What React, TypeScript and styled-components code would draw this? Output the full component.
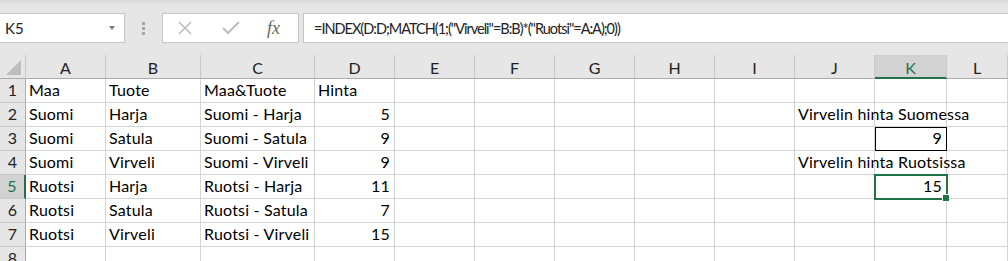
import React from "react";
import styled, { createGlobalStyle } from "styled-components";

const GlobalStyle = createGlobalStyle`
  html, body {
    margin: 0;
    padding: 0;
    background: #ffffff;
    overflow: hidden;
  }
  body {
    font-family: Lato, "Liberation Sans", sans-serif;
    color: #000;
  }
`;

const Sheet = styled.div`
  width: 1008px;
  height: 261px;
  overflow: hidden;
  background: #e6e6e6;
`;

const FormulaBar = styled.div`
  height: 55px;
  display: flex;
  align-items: flex-start;
  padding-top: 13px;
  box-sizing: border-box;
  background: linear-gradient(#d9d9d9 0px, #e6e6e6 5px);
`;

const NameBox = styled.div`
  width: 125px;
  height: 30px;
  box-sizing: border-box;
  background: #fff;
  border: 1px solid #c6c6c6;
  border-left: none;
  display: flex;
  align-items: center;
  justify-content: space-between;
  padding: 0 9px 0 5px;
  font-size: 15px;
  color: #222;
`;

const DropArrow = styled.span`
  width: 0;
  height: 0;
  border-left: 3px solid transparent;
  border-right: 3px solid transparent;
  border-top: 4px solid #7a7a7a;
`;

const Grip = styled.div`
  width: 37px;
  height: 30px;
  display: flex;
  flex-direction: column;
  align-items: center;
  justify-content: center;
  gap: 2px;
`;

const GripDot = styled.span`
  width: 3px;
  height: 3px;
  background: #a6a6a6;
`;

const FxBox = styled.div`
  width: 137px;
  height: 30px;
  box-sizing: border-box;
  background: #fff;
  border: 1px solid #c6c6c6;
  display: flex;
  align-items: center;
  padding-left: 14px;
  gap: 29px;
`;

const Fx = styled.span`
  font-family: "Liberation Serif", serif;
  font-style: italic;
  font-size: 18px;
  color: #666;
  margin-left: -2px;
`;

const FormulaInput = styled.div`
  flex: 1;
  margin-left: 4px;
  height: 30px;
  box-sizing: border-box;
  background: #fff;
  border: 1px solid #c6c6c6;
  border-right: none;
  display: flex;
  align-items: center;
  padding-left: 10px;
  font-size: 14.5px;
  letter-spacing: -1px;
  color: #222;
  white-space: nowrap;
`;

const Grid = styled.div`
  display: grid;
  grid-template-columns: 26px 80px 95px 114px 80px 80px 80px 80px 80px 80px 80px 72px 1fr;
  grid-auto-rows: 24px;
  background: #fff;
`;

const Corner = styled.div`
  background: #e6e6e6;
  border-right: 1px solid #c8c8c8;
  border-bottom: 1px solid #ababab;
  position: relative;
  &::after {
    content: "";
    position: absolute;
    right: 4px;
    bottom: 3px;
    width: 0;
    height: 0;
    border-left: 15px solid transparent;
    border-bottom: 15px solid #bdbdbd;
  }
`;

const ColHeader = styled.div<{ $selected?: boolean }>`
  background: ${p => (p.$selected ? "#d2d2d2" : "#e6e6e6")};
  border-right: 1px solid #c8c8c8;
  border-bottom: ${p => (p.$selected ? "2px solid #217346" : "1px solid #ababab")};
  display: flex;
  align-items: center;
  justify-content: center;
  font-size: 16px;
  padding-top: 2px;
  color: ${p => (p.$selected ? "#217346" : "#222")};
`;

const RowHeader = styled.div<{ $selected?: boolean }>`
  background: ${p => (p.$selected ? "#d2d2d2" : "#e6e6e6")};
  border-right: ${p => (p.$selected ? "2px solid #217346" : "1px solid #ababab")};
  border-bottom: 1px solid #c8c8c8;
  display: flex;
  align-items: flex-end;
  justify-content: center;
  padding-bottom: 3px;
  box-sizing: border-box;
  font-size: 16px;
  color: ${p => (p.$selected ? "#217346" : "#222")};
`;

const Cell = styled.div<{ $align?: "left" | "right"; $boxed?: boolean; $active?: boolean }>`
  position: relative;
  box-sizing: border-box;
  border-right: 1px solid #d4d4d4;
  border-bottom: 1px solid #d4d4d4;
  display: flex;
  align-items: flex-end;
  justify-content: ${p => (p.$align === "right" ? "flex-end" : "flex-start")};
  padding: 0 4px 3px 3px;
  font-size: 16px;
  letter-spacing: 0.2px;
  white-space: nowrap;
  overflow: visible;
  ${p => p.$boxed && `outline: 1px solid #000; outline-offset: -1px; z-index: 1;`}
  ${p => p.$active && `outline: 2px solid #217346; outline-offset: -1px; z-index: 2;`}
`;

const FillHandle = styled.span`
  position: absolute;
  right: -4px;
  bottom: -4px;
  width: 6px;
  height: 6px;
  background: #217346;
  border: 1px solid #fff;
`;

const Text = styled.span`
  position: relative;
  z-index: 3;
`;

const columns = ["A", "B", "C", "D", "E", "F", "G", "H", "I", "J", "K", "L"];

type Row = { [col: string]: string | number };

const rows: Row[] = [
  { A: "Maa", B: "Tuote", C: "Maa&Tuote", D: "Hinta" },
  { A: "Suomi", B: "Harja", C: "Suomi - Harja", D: 5, J: "Virvelin hinta Suomessa" },
  { A: "Suomi", B: "Satula", C: "Suomi - Satula", D: 9, K: 9 },
  { A: "Suomi", B: "Virveli", C: "Suomi - Virveli", D: 9, J: "Virvelin hinta Ruotsissa" },
  { A: "Ruotsi", B: "Harja", C: "Ruotsi - Harja", D: 11, K: 15 },
  { A: "Ruotsi", B: "Satula", C: "Ruotsi - Satula", D: 7 },
  { A: "Ruotsi", B: "Virveli", C: "Ruotsi - Virveli", D: 15 },
  {},
];

const CrossIcon = () => (
  <svg width="16" height="14" viewBox="0 0 16 14">
    <path d="M2 1 L14 13 M14 1 L2 13" stroke="#bdbdbd" strokeWidth="1.6" fill="none" />
  </svg>
);

const CheckIcon = () => (
  <svg width="18" height="14" viewBox="0 0 18 14">
    <path d="M1 7 L6 12 L17 1" stroke="#bdbdbd" strokeWidth="2" fill="none" />
  </svg>
);

const App: React.FC = () => {
  return (
    <Sheet>
      <GlobalStyle />
      <FormulaBar>
        <NameBox>
          <span>K5</span>
          <DropArrow />
        </NameBox>
        <Grip>
          <GripDot />
          <GripDot />
          <GripDot />
        </Grip>
        <FxBox>
          <CrossIcon />
          <CheckIcon />
          <Fx>fx</Fx>
        </FxBox>
        <FormulaInput>=INDEX(D:D;MATCH(1;("Virveli"=B:B)*("Ruotsi"=A:A);0))</FormulaInput>
      </FormulaBar>
      <Grid>
        <Corner />
        {columns.map(c => (
          <ColHeader key={c} $selected={c === "K"}>
            {c}
          </ColHeader>
        ))}
        {rows.map((row, idx) => (
          <React.Fragment key={idx}>
            <RowHeader $selected={idx === 4}>{idx + 1}</RowHeader>
            {columns.map(c => {
              const v = row[c];
              const isNum = typeof v === "number";
              const active = c === "K" && idx === 4;
              return (
                <Cell
                  key={c}
                  $align={isNum ? "right" : "left"}
                  $boxed={c === "K" && idx === 2}
                  $active={active}
                >
                  {v !== undefined && <Text>{v}</Text>}
                  {active && <FillHandle />}
                </Cell>
              );
            })}
          </React.Fragment>
        ))}
      </Grid>
    </Sheet>
  );
};

export default App;
